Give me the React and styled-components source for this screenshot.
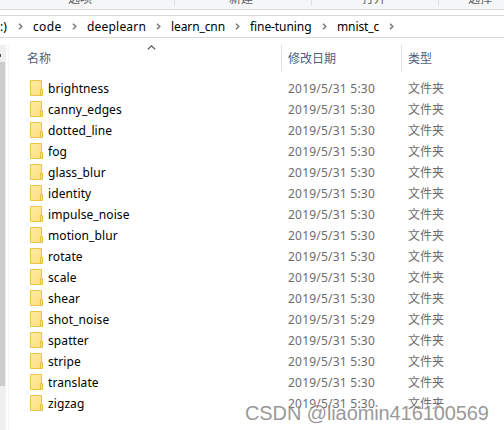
import React from "react";
import styled, { createGlobalStyle } from "styled-components";

const Global = createGlobalStyle`
  * { box-sizing: border-box; }
  body { margin: 0; background: #fff; overflow: hidden; }
`;

const Window = styled.main`
  position: relative;
  width: 504px;
  height: 430px;
  overflow: hidden;
  display: flex;
  flex-direction: column;
  background: #fff;
  font: 12px/21px "Noto Sans", "Noto Sans CJK SC", sans-serif;
  color: #000;
  white-space: pre;
`;

const Ribbon = styled.header`
  flex: none;
  height: 10px;
  display: grid;
  grid-template-columns: 175px 137px 127px 85px;
  background: #f5f6f7;
  border-bottom: 1px solid #dadbdc;
  overflow: hidden;
`;

const RibbonGroup = styled.div`
  height: 6px;
  border-right: 1px solid #e0e1e2;
  padding-left: ${(p) => p.$pad}px;
  color: #5a5d61;
  line-height: 16px;
`;

const GroupLabel = styled.span`
  display: block;
  margin-top: -9px;
`;

const AddressBar = styled.nav`
  flex: none;
  height: 23px;
  margin-top: 5px;
  border: solid #d9d9d9;
  border-width: 1px 0;
  display: flex;
  align-items: center;
  overflow: hidden;
`;

const Crumb = styled.span`
  flex: none;
  width: ${(p) => p.$w}px;
  line-height: 21px;
  letter-spacing: ${(p) => p.$ls}px;
`;

const Arrow = styled.svg`
  flex: none;
  width: 5px;
  height: 7px;
  margin-right: 10px;
`;

const Body = styled.section`
  flex: 1;
  display: flex;
  padding-top: 7px;
`;

const ScrollTrack = styled.div`
  flex: none;
  width: 6px;
  background: #f0f0f0;
`;

const ScrollButton = styled.div`
  height: 17px;
  padding-top: 9px;

  &::before {
    content: "";
    display: block;
    width: 1px;
    height: 3px;
    background: #505050;
  }
`;

const ScrollThumb = styled.div`
  width: 5px;
  height: 324px;
  background: #cdcdcd;
`;

const FileList = styled.div`
  flex: 1;
  margin-left: 2px;
  border-left: 1px solid #f3f3f3;
`;

const Row = styled.div`
  display: grid;
  grid-template-columns: 273px 120px 1fr;
  height: 21px;
`;

const HeaderRow = styled(Row)`
  height: 27px;
  margin-bottom: 6px;
  color: #4c607a;
`;

const HeaderCell = styled.div`
  position: relative;
  padding-left: ${(p) => p.$pad}px;
  border-right: ${(p) => (p.$last ? 0 : 1)}px solid #e2e2e2;
  line-height: 27px;
`;

const SortMark = styled.svg`
  position: absolute;
  left: 138px;
  top: 0;
  width: 9px;
  height: 5px;
`;

const NameCell = styled.div`
  display: flex;
  align-items: center;
  padding-left: 21px;
  letter-spacing: 0.09px;
`;

const Folder = styled.svg`
  flex: none;
  width: 13px;
  height: 16px;
  margin: -1px 5px 0 0;
`;

const MetaCell = styled.div`
  padding-left: 6px;
  color: #6d6d6d;
  letter-spacing: ${(p) => (p.$date ? 0.22 : 0)}px;
`;

const Watermark = styled.div`
  position: absolute;
  left: 245px;
  top: 399px;
  font: 20px/28px "Liberation Sans", sans-serif;
  letter-spacing: -0.1px;
  color: rgba(125, 125, 125, 0.8);
  text-shadow: -1px -1px 0 rgba(255, 255, 255, 0.5);
`;

const groups = [["选项", 68], ["新建", 54], ["打开", 50], ["选择", 29]];
const crumbs = [
  ["code", 39, 0.35],
  ["deeplearn", 69, 0.2],
  ["learn_cnn", 64, -0.1],
  ["fine-tuning", 72, -0.08],
  ["mnist_c", 52, -0.1],
];
const files = ["brightness", "canny_edges", "dotted_line", "fog", "glass_blur", "identity", "impulse_noise", "motion_blur",
  "rotate", "scale", "shear", "shot_noise", "spatter", "stripe", "translate", "zigzag"];

function Chevron() {
  return (
    <Arrow viewBox="0 0 5 7">
      <path d="M1 .7 3.8 3.5 1 6.3" fill="none" stroke="#777" strokeWidth="1.5" />
    </Arrow>
  );
}

function FolderIcon() {
  return (
    <Folder viewBox="0 0 13 16">
      <defs>
        <linearGradient id="paper" x1="0" y1="0" x2="1" y2="1">
          <stop offset="0" stopColor="#ffeba4" />
          <stop offset="1" stopColor="#ffdf7d" />
        </linearGradient>
      </defs>
      <path d="M.5.5h11v15H.5z" fill="url(#paper)" stroke="#eac54d" />
      <path d="M10.5 9.5h2v6h-2z" fill="#ffe48f" stroke="#e6bf45" />
    </Folder>
  );
}

export default function App() {
  return (
    <Window>
      <Global />
      <Ribbon>
        {groups.map(([label, pad]) => (
          <RibbonGroup key={label} $pad={pad}><GroupLabel>{label}</GroupLabel></RibbonGroup>
        ))}
      </Ribbon>
      <AddressBar>
        <Crumb $w={18} $ls={0}>:)</Crumb>
        <Chevron />
        {crumbs.map(([label, w, ls]) => (
          <React.Fragment key={label}>
            <Crumb $w={w} $ls={ls}>{label}</Crumb>
            <Chevron />
          </React.Fragment>
        ))}
      </AddressBar>
      <Body>
        <ScrollTrack><ScrollButton /><ScrollThumb /></ScrollTrack>
        <FileList>
          <HeaderRow>
            <HeaderCell $pad={18}>
              名称
              <SortMark viewBox="0 0 9 5"><path d="M.8 4.4 4.5.8l3.7 3.6" fill="none" stroke="#555" strokeWidth="1.2" /></SortMark>
            </HeaderCell>
            <HeaderCell $pad={6}>修改日期</HeaderCell>
            <HeaderCell $pad={6} $last>类型</HeaderCell>
          </HeaderRow>
          {files.map((name) => (
            <Row key={name}>
              <NameCell><FolderIcon />{name}</NameCell>
              <MetaCell $date>{name === "shot_noise" ? "2019/5/31 5:29" : "2019/5/31 5:30"}</MetaCell>
              <MetaCell>文件夹</MetaCell>
            </Row>
          ))}
        </FileList>
      </Body>
      <Watermark>CSDN @liaomin416100569</Watermark>
    </Window>
  );
}
